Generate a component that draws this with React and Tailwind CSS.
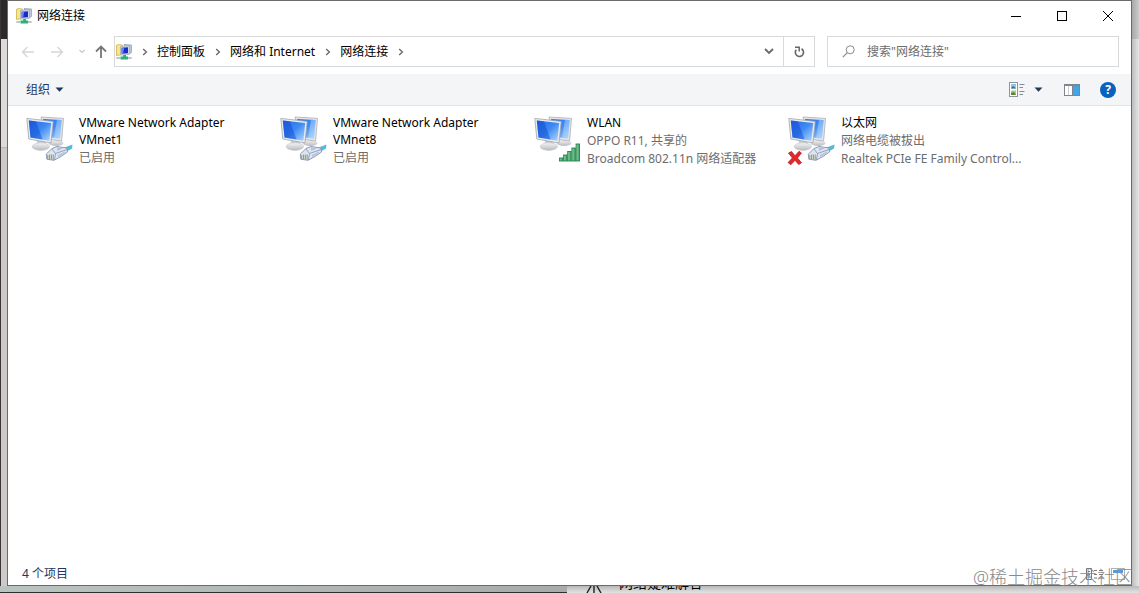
import React, { useState } from 'react';

const connections = [
  { name: 'VMware Network Adapter VMnet1', details: ['已启用'], kind: 'cable' },
  { name: 'VMware Network Adapter VMnet8', details: ['已启用'], kind: 'cable' },
  { name: 'WLAN', details: ['OPPO R11, 共享的', 'Broadcom 802.11n 网络适配器'], kind: 'wifi' },
  { name: '以太网', details: ['网络电缆被拔出', 'Realtek PCIe FE Family Control...'], kind: 'unplugged' },
];

const crumbs = ['控制面板', '网络和 Internet', '网络连接'];

const NetworkIcon = () => (
  <svg width="16" height="16" viewBox="0 0 16 16" className="shrink-0" aria-hidden="true">
    <path d="M0.5 1.2L3.5 0.4L6.5 1.2V10.5L0.5 11.5Z" fill="#f7e786" stroke="#cdb14a" strokeWidth="0.8" />
    <path d="M8 0.5L15.5 1V8.5L13 10Z" fill="#b9c7d8" stroke="#8c9ab0" strokeWidth="0.7" />
    <path d="M4.6 2.4L13.2 1.8V10.4L4.6 11Z" fill="#dfe5f0" stroke="#93a0b6" strokeWidth="0.7" />
    <path d="M5.6 3.8L12 3.2V9.2L5.6 9.8Z" fill="#1a2cc8" />
    <path d="M5.6 3.8L8.2 3.6L7.2 9.6L5.6 9.8Z" fill="#6a83f0" />
    <path d="M7.2 11H10V12.6H12V15.6H4.5V12.6H7.2Z" fill="#27b373" />
    <path d="M0.3 14H4.5M12 14H15.7" stroke="#a9b8b2" strokeWidth="1.4" />
  </svg>
);

const Chevron = () => (
  <span className="flex w-[25px] justify-center">
    <svg width="6" height="8" viewBox="0 0 6 8" aria-hidden="true">
      <path d="M1.2 1L4.4 4L1.2 7" fill="none" stroke="#6b6b6b" strokeWidth="1.4" />
    </svg>
  </span>
);

const Caret = () => (
  <svg width="9" height="5" viewBox="0 0 9 5" aria-hidden="true">
    <path d="M0.5 0.5H8.5L4.5 4.7Z" fill="#1e395b" />
  </svg>
);

const CablePlug = () => (
  <g>
    <path d="M38 34.5L48.5 30.5L48 34.5L41 38.5Z" fill="#56b9d6" />
    <path d="M22.3 40L28 34.5L33 32.5L43 34L43.5 38L37 42.5L30 46.3L22.8 45.2Z" fill="#dde5f1" stroke="#8491b0" strokeWidth="0.9" />
    <path d="M28 35L31.5 39.5L43 35.5M31.5 39.5L30.5 46" fill="none" stroke="#8491b0" strokeWidth="0.8" />
    <path d="M33 33.5L39 34.2L33 37Z" fill="#b3c1da" />
    <path d="M34 41L41 37.5V39L34 43Z" fill="#b3c1da" />
    <path d="M23.8 41V45M25.6 40.5V45.3M27.4 40.5V45.5M29.2 40.5V45.7" stroke="#8d9146" strokeWidth="0.9" />
  </g>
);

const SignalBars = () => (
  <g fill="url(#signal)" stroke="#25824b" strokeWidth="0.9">
    <rect x="27.5" y="44" width="3.4" height="3" />
    <rect x="31.6" y="41" width="3.4" height="6" />
    <rect x="35.7" y="37.5" width="3.4" height="9.5" />
    <rect x="39.9" y="34" width="3.4" height="13" />
    <rect x="44.1" y="30" width="3.4" height="17" />
  </g>
);

const ConnectionIcon = ({ kind }) => (
  <svg width="50" height="52" viewBox="0 0 50 52" className="shrink-0" aria-hidden="true">
    <defs>
      <linearGradient id="screen" x1="0" y1="0" x2="1" y2="1">
        <stop offset="0" stopColor="#2a68e6" />
        <stop offset="0.5" stopColor="#3d8af4" />
        <stop offset="1" stopColor="#b4dafd" />
      </linearGradient>
      <linearGradient id="stand" x1="0" y1="0" x2="0" y2="1">
        <stop offset="0" stopColor="#f4f4f4" />
        <stop offset="1" stopColor="#b8babe" />
      </linearGradient>
      <linearGradient id="signal" x1="0" y1="0" x2="1" y2="0">
        <stop offset="0" stopColor="#8fd0a6" />
        <stop offset="1" stopColor="#3fa266" />
      </linearGradient>
    </defs>
    {/* back monitor */}
    <ellipse cx="32" cy="29" rx="7.5" ry="3" fill="url(#stand)" />
    <path d="M17 3L39.5 4.4L37.6 27L22 25Z" fill="#e3e5e8" stroke="#abafb6" strokeWidth="0.8" />
    <path d="M19 4.9L37.6 6L36 24.6L23 23Z" fill="url(#screen)" />
    <path d="M33 5.8L37.6 6L36 24.6L30 24Z" fill="#bcdcfc" fillOpacity="0.45" />
    {/* front monitor */}
    <path d="M13 26L21 27L22.5 32H12.5Z" fill="#c9ccd0" />
    <ellipse cx="16.8" cy="32.6" rx="8.7" ry="3.8" fill="url(#stand)" stroke="#bfc1c5" strokeWidth="0.5" />
    <path d="M2.8 4.4L29.2 7.4L27 29L4.8 25Z" fill="#e9ebee" stroke="#a1a5ac" strokeWidth="0.8" />
    <path d="M4.8 6.4L27.2 9L25.4 26.8L6.5 23.4Z" fill="url(#screen)" />
    <path d="M4.8 6.4L12 7.3L18.5 25.5L6.5 23.4Z" fill="#0b45cc" fillOpacity="0.45" />
    {kind === 'wifi' ? <SignalBars /> : <CablePlug />}
    {kind === 'unplugged' && (
      <path d="M2.5 39L5.5 37.5L9 41.8L13 37.3L15.5 39L11.5 44L15.5 48.8L12.7 50.6L9 46.3L4.8 50.8L2 48.5L6.4 44Z" fill="#e3282c" stroke="#b51519" strokeWidth="0.7" />
    )}
  </svg>
);

const TitleBar = () => (
  <header className="flex h-[29px] items-center pl-2">
    <NetworkIcon />
    <h1 className="ml-[5px] flex-1">网络连接</h1>
    <button aria-label="最小化" className="flex h-full w-[46px] items-center justify-center hover:bg-gray-200">
      <svg width="10" height="10" viewBox="0 0 10 10"><path d="M0 5.5H10" stroke="#000" /></svg>
    </button>
    <button aria-label="最大化" className="flex h-full w-[46px] items-center justify-center hover:bg-gray-200">
      <svg width="10" height="10" viewBox="0 0 10 10"><rect x="0.5" y="0.5" width="9" height="9" fill="none" stroke="#000" /></svg>
    </button>
    <button aria-label="关闭" className="flex h-full w-[46px] items-center justify-center hover:bg-red-600">
      <svg width="10" height="10" viewBox="0 0 10 10"><path d="M0 0L10 10M10 0L0 10" stroke="#000" /></svg>
    </button>
  </header>
);

const NavBar = () => {
  const [query, setQuery] = useState('');

  return (
    <nav className="flex items-center pt-1.5 pr-3 pb-[7px] pl-[13px]">
      <button aria-label="后退" disabled className="flex w-[29px]">
        <svg width="14" height="12" viewBox="0 0 14 12"><path d="M13 6H2M6.5 1L1.5 6L6.5 11" fill="none" stroke="#d6d6d6" strokeWidth="1.4" /></svg>
      </button>
      <button aria-label="前进" disabled className="flex w-[29px]">
        <svg width="14" height="12" viewBox="0 0 14 12"><path d="M1 6H12M7.5 1L12.5 6L7.5 11" fill="none" stroke="#d6d6d6" strokeWidth="1.4" /></svg>
      </button>
      <button aria-label="最近浏览的位置" className="flex w-[16px]">
        <svg width="6" height="5" viewBox="0 0 6 5"><path d="M0.5 1L3 3.5L5.5 1" fill="none" stroke="#c8c8c8" strokeWidth="1.2" /></svg>
      </button>
      <button aria-label="上移" className="flex w-[19px]">
        <svg width="12" height="13" viewBox="0 0 12 13"><path d="M6 13V2M1 6.5L6 1.5L11 6.5" fill="none" stroke="#777" strokeWidth="1.8" /></svg>
      </button>

      <div className="flex h-[31px] flex-1 items-center border border-[#d9d9d9] pl-px">
        <NetworkIcon />
        {crumbs.map((crumb) => (
          <React.Fragment key={crumb}>
            <Chevron />
            <button className="whitespace-nowrap">{crumb}</button>
          </React.Fragment>
        ))}
        <Chevron />
        <button aria-label="上一个位置" className="ml-auto flex h-full w-[29px] items-center justify-center">
          <svg width="10" height="7" viewBox="0 0 10 7"><path d="M1 1L5 5L9 1" fill="none" stroke="#6b6b6b" strokeWidth="1.9" /></svg>
        </button>
        <button aria-label="刷新" className="flex h-full w-[31px] items-center justify-center border-l border-[#d9d9d9]">
          <svg width="11" height="12" viewBox="0 0 11 12">
            <path d="M7.5 2.8A4.1 4.1 0 1 1 2.2 3.8" fill="none" stroke="#666" strokeWidth="1.6" />
            <path d="M1 1.2H5.2V5.6" fill="none" stroke="#666" strokeWidth="1.5" />
          </svg>
        </button>
      </div>

      <div className="ml-3 flex h-[31px] w-[292px] items-center border border-[#d9d9d9] pl-3.5">
        <svg width="13" height="13" viewBox="0 0 13 13" className="mr-3 shrink-0" aria-hidden="true">
          <circle cx="8.2" cy="4.8" r="4" fill="none" stroke="#8a8a8a" />
          <path d="M5.3 7.7L0.8 12.2" stroke="#8a8a8a" strokeWidth="1.2" />
        </svg>
        <input
          type="text" aria-label="搜索" placeholder={'搜索"网络连接"'}
          className="w-full min-w-0 outline-none placeholder:text-[#6d6d6d]"
          value={query} onChange={(e) => setQuery(e.target.value)}
        />
      </div>
    </nav>
  );
};

const Toolbar = () => (
  <div className="flex h-8 items-center border-b border-[#e2e5e8] bg-[#f3f5f7] pr-[15px] pl-[18px] text-[#1e395b]">
    <button className="flex items-center gap-[5px]">组织 <Caret /></button>
    <button aria-label="更改视图" className="ml-auto">
      <svg width="16" height="16" viewBox="0 0 16 16">
        <rect x="0.5" y="0.5" width="8" height="14" fill="#fff" stroke="#8d939b" />
        <rect x="2" y="2" width="5" height="4.5" fill="#8fc3ea" />
        <path d="M2 6.5L4 4L7 6.5Z" fill="#2f6a91" />
        <rect x="2" y="8.5" width="5" height="4.5" fill="#a9cf74" />
        <path d="M2 11L5 10L7 13H2Z" fill="#5b873a" />
        <path d="M10.5 2.5H15.5M10.5 5.5H14M10.5 9.5H15.5M10.5 12.5H14" stroke="#858b94" />
      </svg>
    </button>
    <button aria-label="更多选项" className="ml-[9px]"><Caret /></button>
    <button aria-label="显示预览窗格" className="ml-[21px]">
      <svg width="16" height="12" viewBox="0 0 16 12">
        <rect x="0.5" y="0.5" width="15" height="11" fill="#fff" stroke="#7e858e" />
        <path d="M0 1.2H16" stroke="#7e858e" strokeWidth="1.6" />
        <rect x="9" y="2" width="6" height="9" fill="#43a5e4" />
        <path d="M4.5 2V11" stroke="#cdd1d6" />
        <path d="M8.5 2V11" stroke="#7e858e" />
      </svg>
    </button>
    <button aria-label="获取帮助" className="ml-5 flex h-4 w-4 items-center justify-center rounded-full bg-[#0a62bd] font-bold text-white">?</button>
  </div>
);

const ConnectionItem = ({ connection }) => (
  <li className="flex">
    <ConnectionIcon kind={connection.kind} />
    <div className="ml-[5px] w-[190px]">
      <h2 className="pb-px leading-[17px]">{connection.name}</h2>
      {connection.details.map((line) => (
        <p key={line} className="truncate leading-[18px] text-[#6d6d6d]">{line}</p>
      ))}
    </div>
  </li>
);

const StatusBar = () => (
  <footer className="flex h-[22px] items-center pr-1 pl-3.5 text-[#1e395b]">
    <span className="flex-1">{connections.length} 个项目</span>
    <svg width="42" height="14" viewBox="0 0 42 14" aria-hidden="true">
      <path d="M1.5 1.5H6.5V12.5H1.5ZM3 4.5H5M3 7.5H5M3 10H5M9 3.5H12M14 3.5H18M9 7.5H12M14 7.5H18M9 11H12M14 11H18" fill="none" stroke="#777" />
      <rect x="26.5" y="1.5" width="13" height="11" fill="#fff" stroke="#b0b0b0" />
      <path d="M28 3H38V6H28Z" fill="#5a9be0" />
    </svg>
  </footer>
);

const App = () => {
  return (
    <div className="relative flex min-h-screen flex-col overflow-hidden bg-[#e6e6e6] font-['Noto_Sans','Noto_Sans_CJK_SC',sans-serif] text-[12px] leading-4 text-black">
      <div className="flex flex-1">
        {/* desktop left of the window */}
        <div className="flex w-[7px] flex-col border-l border-[#3a3839] bg-[#cdc9c9]">
          <div className="h-[39px] bg-[#2c2a2b]" />
          <div className="h-[109px] border-b border-[#b9b6b6] bg-[#dddada]" />
        </div>

        <main className="flex min-w-0 flex-1 flex-col border border-[#6b696a] bg-white">
          <TitleBar />
          <NavBar />
          <Toolbar />
          <ul className="grid flex-1 grid-cols-[repeat(auto-fill,254px)] content-start gap-y-4 pt-2 pl-4">
            {connections.map((connection) => (
              <ConnectionItem key={connection.name} connection={connection} />
            ))}
          </ul>
          <StatusBar />
        </main>

        <div className="w-[7px] bg-linear-to-r from-[#bdbdbd] to-[#e6e6e6]">
          <div className="h-[39px] bg-linear-to-r from-[#a8a8a8] to-[#cbcbcb]" />
        </div>
      </div>

      {/* what shows of the page under the window */}
      <div className="flex h-[7px] overflow-hidden">
        <div className="w-[567px] border-b border-[#2f2f33] bg-linear-to-r from-[#b9c4c1] to-[#a9abab]" />
        <div className="flex flex-1 items-end bg-linear-to-b from-[#b8b8b8] to-[#e4e4e4] pl-[19px]">
          <svg width="16" height="7" viewBox="0 0 16 7" className="mr-[17px]" aria-hidden="true">
            <path d="M5 0L1 7M11 0L15 7M8 0V7" stroke="#222" strokeWidth="1.4" />
          </svg>
          <span className="text-[14px] leading-5">网络疑难解答</span>
        </div>
      </div>

      <div className="absolute right-1.5 bottom-1.5 text-[18px] leading-5 font-light text-[#8a8a8a]">@稀土掘金技术社区</div>
    </div>
  );
};

export default App;
